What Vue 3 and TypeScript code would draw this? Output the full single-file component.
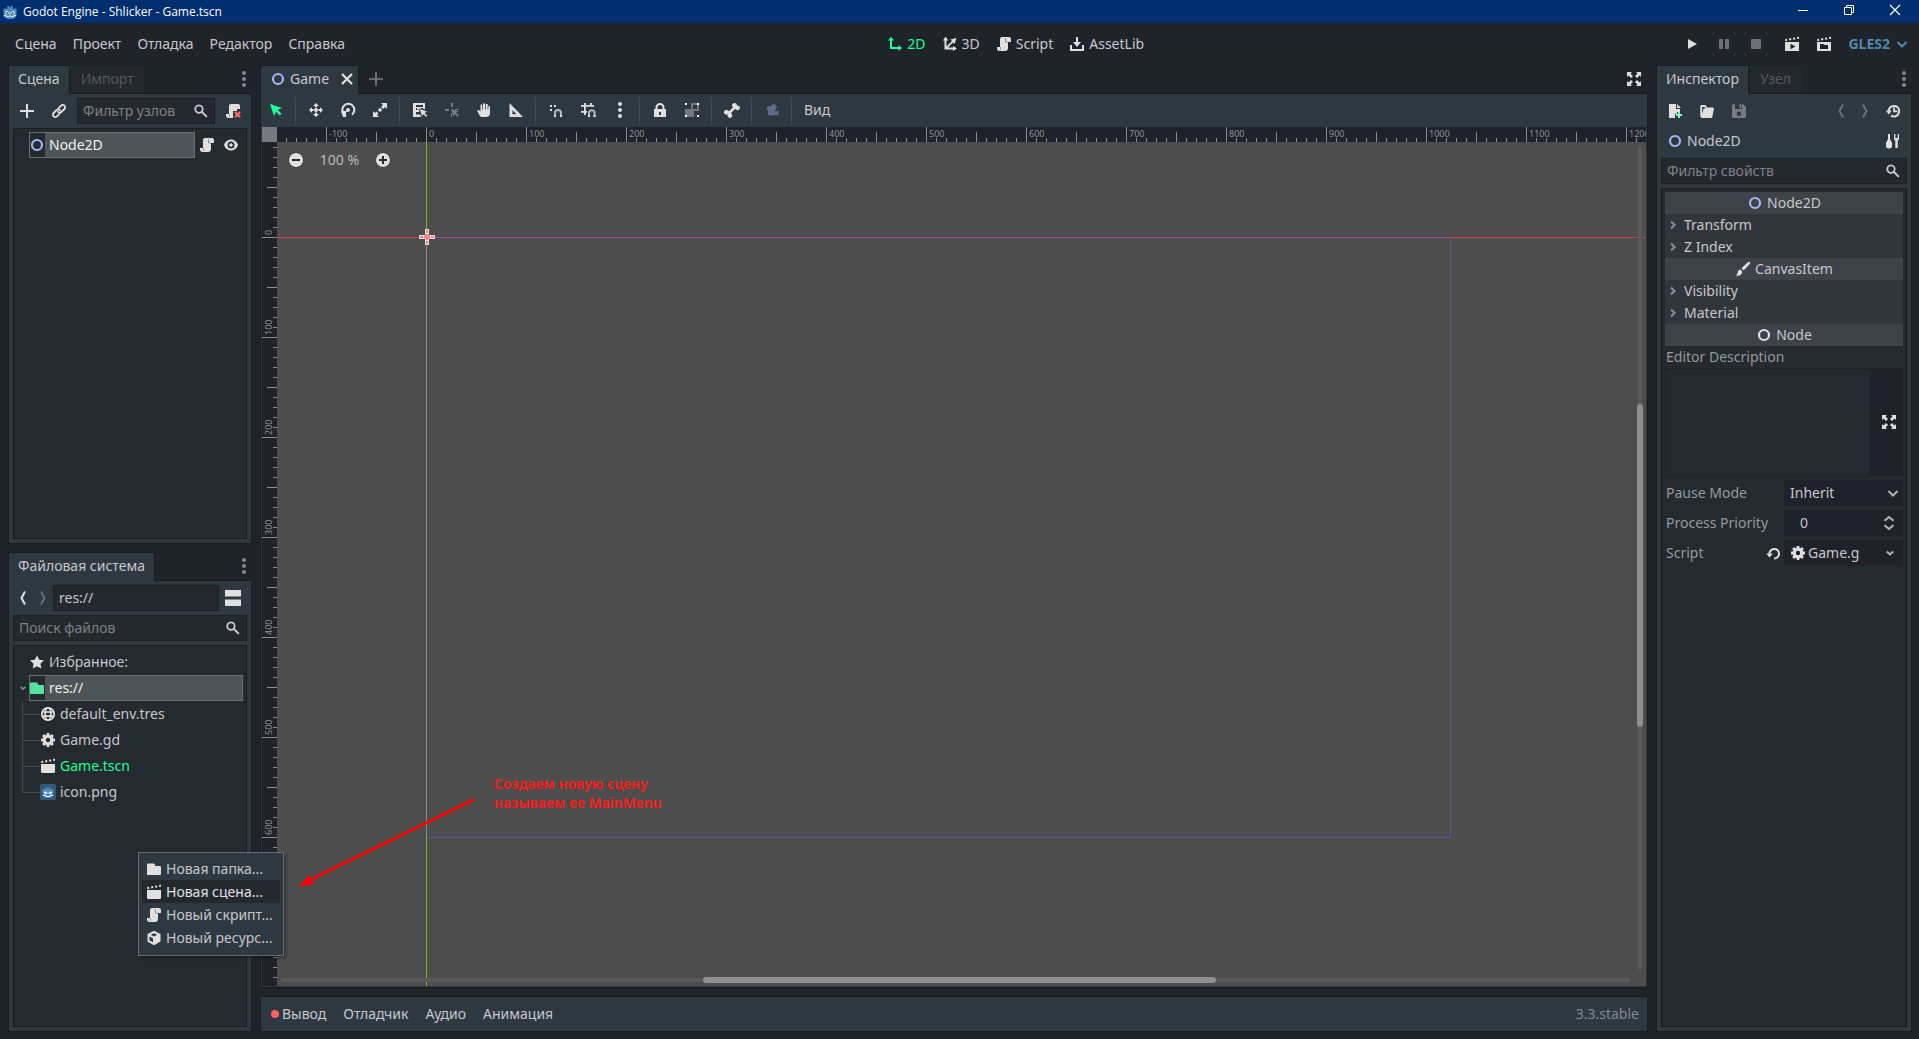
<script setup lang="ts">
import { computed, h, onBeforeUnmount, onMounted, ref } from 'vue'

const icons: Record<string, string> = {
  add: '<path d="M7 1v6H1v2h6v6h2V9h6V7H9V1z"/>',
  addThin: '<path d="M7.2 1v6.2H1v1.6h6.2V15h1.6V8.800H15V7.200H8.800V1z"/>',
  link: '<g fill="none" stroke="currentColor" stroke-width="1.800" stroke-linecap="round"><path d="M7.600 5.200l2.500-2.500a2.300 2.300 0 0 1 3.300 3.300l-3 3a2.300 2.300 0 0 1-3.400-.2"/><path d="M8.400 10.800l-2.500 2.500A2.300 2.300 0 0 1 2.600 10l3-3A2.300 2.300 0 0 1 9 7.200"/></g>',
  search: '<path fill-rule="evenodd" d="M6 1.500a4.600 4.600 0 1 0 2.500 8.400l4.700 4.700 1.400-1.400-4.700-4.700A4.600 4.600 0 0 0 6 1.500m0 1.800a2.800 2.800 0 1 1 0 5.600 2.800 2.800 0 0 1 0-5.600"/>',
  script: '<path d="M6 1a2 2 0 0 0-2 2v8H1v2a2.500 2.500 0 0 0 2.500 2H9a3 3 0 0 0 3-3V6h3V3a2 2 0 0 0-2-2z"/><path d="M9.500 2v4H12" fill="none" stroke="#8d9194" stroke-width="1"/><path d="M4.500 11v3" stroke="#9a9da0" stroke-width="1"/>',
  scriptRemove: '<path d="M6 1a2 2 0 0 0-2 2v8H1v2a2.500 2.500 0 0 0 2.500 2H8V8h4V6h3V3a2 2 0 0 0-2-2z"/><path d="M4.500 11v3" stroke="#9a9da0" stroke-width="1"/><path d="M10 9l5 5M15 9l-5 5" stroke="#ff6b6b" stroke-width="2.200"/>',
  ring: '<circle cx="8" cy="8" r="5" fill="none" stroke="currentColor" stroke-width="2.200"/>',
  eye: '<path fill-rule="evenodd" d="M8 2.500C5 2.500 2.200 4.400 1 8c1.200 3.600 4 5.500 7 5.500s5.800-1.900 7-5.500c-1.200-3.600-4-5.500-7-5.500m0 2a3.500 3.500 0 1 1 0 7 3.500 3.500 0 0 1 0-7"/><circle cx="8" cy="8" r="1.800"/>',
  dots: '<circle cx="8" cy="2" r="2"/><circle cx="8" cy="8" r="2"/><circle cx="8" cy="14" r="2"/>',
  close: '<path d="M3 3l10 10M13 3L3 13" stroke="currentColor" stroke-width="2.200"/>',
  select: '<path d="M2 2l4 12 2-4.200 3.800 3.700 1.700-1.700L9.800 8 14 6z"/>',
  move: '<circle cx="8" cy="8" r="2"/><path d="M8 1L5 4h2v1.500h2V4h2zM8 15l-3-3h2v-1.500h2V12h2zM1 8l3-3v2h1.500v2H4v2zM15 8l-3-3v2h-1.500v2H12v2z"/>',
  rotate: '<path d="M4.200 12.200A6 6 0 1 1 12 12.600" fill="none" stroke="currentColor" stroke-width="2"/><circle cx="8" cy="8" r="2"/><path d="M1 9h6l-1 1.800V15H3z"/>',
  scale: '<path d="M9 1h6v6l-2-2-2 2-2-2 2-2zM7 15H1V9l2 2 1.500-1.500 2 2L5 13z"/><circle cx="8" cy="8" r="1.800"/>',
  list: '<path d="M1 1h12v6.500l-2-1V3H4v2h7v1H4v2h3l.5 2H4v2.500h4.300L9 15H1z"/><path d="M5 6h4v1.500H5z"/><path d="M7.500 6.500l2.400 8.500 1.500-2.500 2.600 2.800 1.500-1.500-2.600-2.600L15.500 9.500z" stroke="#2e3840" stroke-width=".6"/>',
  pivot: '<path d="M7 1h2v4H7zM1 7h4v2H1zM11 7h4v1h-4zM7 11h1v4H7z"/><path d="M7 7l2.200 7.500 1.500-2.500 2.600 2.800 1.400-1.400-2.600-2.600L14.500 9.300z"/>',
  pan: '<path d="M7 1.500v6H6.300V2.600H4.500v7L2.700 8 1 8.500l2.500 4.700C4.200 14.500 5.500 15 7 15h3c2.500 0 4-1.500 4-4V4.300h-1.700v3.500h-.6V2h-1.800v5.500h-.7v-6z"/>',
  ruler: '<path fill-rule="evenodd" d="M1.500 1v14H15zM4.500 8l4 4.200h-4z"/>',
  snap: '<path d="M2 3h2v2H2zM6 3h2v2H6zM2 7h2v2H2z"/><path d="M7 15v-4a3 3 0 0 1 6 0v4" fill="none" stroke="currentColor" stroke-width="2" opacity=".75"/><path d="M6 13h2v2H6zM12 13h2v2h-2z"/>',
  gridSnap: '<path d="M4 1h1.800v2H10V1h1.800v2H14v1.800H5.800V9H7v1.800H5.800V13H4v-2.200H1V9h3V4.800H1V3h3z"/><path d="M9 15v-4a2.800 2.800 0 0 1 5.600 0v4" fill="none" stroke="currentColor" stroke-width="2" opacity=".75"/><path d="M8 13h2v2H8zM13.600 13h2v2h-2z"/>',
  lock: '<path fill-rule="evenodd" d="M8 1a4.500 4.500 0 0 0-4.500 4.500V7H2v8h12V7h-1.500V5.500A4.500 4.500 0 0 0 8 1m0 2a2.500 2.500 0 0 1 2.500 2.500V7h-5V5.500A2.500 2.500 0 0 1 8 3M7 10h2v3H7z"/>',
  group: '<path fill="#74787c" fill-rule="evenodd" d="M7 1h8v8h-5v6H1V7h6zM9 3v4h4V3z"/><path fill="#fff" d="M1 1h2v2H1zM13 1h2v2h-2zM1 13h2v2H1zM13 13h2v2h-2z"/>',
  bone: '<path d="M10.500 1a2.500 2.500 0 0 0-2.400 3.300L9 5.500 5 9.300 3.900 8.500A2.400 2.400 0 1 0 4 12a2.400 2.400 0 1 0 3.600-.2L7 10.900l4-3.900 1.200.8A2.400 2.400 0 1 0 13 3.500 2.500 2.500 0 0 0 10.500 1"/>',
  camera: '<path d="M9.500 2a3 3 0 0 0-2.800 2.500A2.500 2.500 0 1 0 4 8.800V12a1.500 1.500 0 0 0 1.500 1.500H10A1.500 1.500 0 0 0 11.500 12l3 2V8l-3 2V7.300A3 3 0 0 0 9.500 2"/>',
  axes2d: '<path d="M4 0.800L1 4.500h2V13h8.500v2l3.700-3-3.700-3v2H5V4.500h2z"/>',
  axes3d: '<path d="M3.500.8L.8 4.500h1.700v9h8.500V15l4-2.500L11 10v1.500H6l5-5 1.500 1.500L14.500 2 8.500 3.500 10 5 4.500 10.500v-6h1.800z"/>',
  download: '<path d="M7 1h2v5h3L8 11 4 6h3zM1 9h2v4h10V9h2v6H1z"/>',
  play: '<path d="M4 3v10l9-5z"/>',
  pause: '<path d="M3 3h4v10H3zM9 3h4v10H9z"/>',
  stop: '<path d="M3 3h10v10H3z"/>',
  clapPlay: '<path d="M1 3.200l2-.4.400 2-1.900.4zM5 2.400l2-.4.400 2-2 .4zM9 1.700l2-.3.400 2-2 .3zM13 1l2-.2v2l-1.700.3z"/><path fill-rule="evenodd" d="M1 6h14v9H1zm5.500 1.800v5.400l5-2.700z"/>',
  clapFolder: '<path d="M1 3.200l2-.4.400 2-1.900.4zM5 2.400l2-.4.400 2-2 .4zM9 1.700l2-.3.400 2-2 .3zM13 1l2-.2v2l-1.700.3z"/><path fill-rule="evenodd" d="M1 6h14v9H1zm3 2v5h8V9H8.500L7.500 8z"/>',
  clap: '<path d="M1 3.200l2-.4.400 2-1.900.4zM5 2.400l2-.4.400 2-2 .4zM9 1.700l2-.3.400 2-2 .3zM13 1l2-.2v2l-1.700.3z"/><path d="M1 6h14v7.500a1.500 1.500 0 0 1-1.500 1.500h-11A1.500 1.500 0 0 1 1 13.500z"/>',
  chevDown: '<path d="M3.500 6L8 10.500 12.500 6" fill="none" stroke="currentColor" stroke-width="2"/>',
  chevSmall: '<path d="M4.800 6.500L8 9.500l3.200-3" fill="none" stroke="currentColor" stroke-width="2"/>',
  chevRight: '<path d="M6 4.500L9.500 8 6 11.500" fill="none" stroke="currentColor" stroke-width="2"/>',
  back: '<path d="M10 1.500L6.500 8l3.500 6.500" fill="none" stroke="currentColor" stroke-width="2"/>',
  forward: '<path d="M6 1.500L9.500 8 6 14.500" fill="none" stroke="currentColor" stroke-width="2"/>',
  split: '<path d="M0 0h16v6.500H0zM0 9.500h16V16H0z"/>',
  star: '<path d="M8 1.200l2.100 4.500 4.900.6-3.600 3.400.9 4.900L8 12.200l-4.300 2.400.9-4.900L1 6.300l4.900-.6z"/>',
  folder: '<path d="M2 2.500a1 1 0 0 0-1 1V14h13a1 1 0 0 0 1-1V6a1 1 0 0 0-1-1H9.500l-1-2a1 1 0 0 0-.8-.5z"/>',
  globe: '<g fill="none" stroke="currentColor" stroke-width="1.700"><circle cx="8" cy="8" r="6.200"/><ellipse cx="8" cy="8" rx="2.800" ry="6.200"/><path d="M2 6h12M2 10.200h12"/></g>',
  gear: '<circle cx="8" cy="8" r="3.800" fill="none" stroke="currentColor" stroke-width="3.200"/><g stroke="currentColor" stroke-width="2.800"><path d="M8 1v2.500M8 12.500V15M1 8h2.500M12.500 8H15M3.100 3.100l1.700 1.700M11.200 11.200l1.700 1.700M3.100 12.900l1.700-1.700M11.200 4.800l1.700-1.700"/></g>',
  robotTile: '<rect width="16" height="16" rx="1.500" fill="#355570"/><path fill="#478cbf" d="M2.500 6l1.300-1.300 1 .6.600-.3V3.500L7 3l.5 1.200h1L9 3l1.600.5V5l.6.300 1-.6L13.500 6v6c-1.500 1.500-3.500 2-5.500 2s-4-.5-5.500-2z"/><circle cx="5.400" cy="8.700" r="1.300" fill="#fff"/><circle cx="10.600" cy="8.700" r="1.300" fill="#fff"/><path stroke="#fff" fill="none" stroke-width=".9" d="M3 11.500h3v1h4v-1h3M8 8.500v1.500"/>',
  robot: '<path fill="#478cbf" d="M1 6l2-2 1.500.9.8-.4-.1-2L7 1.800 7.500 3.500h1L9 1.800l1.800.7-.1 2 .8.4L13 4l2 2-.6 1v5.500C12.500 14.400 10.500 15 8 15s-4.500-.6-6.400-2.500V7z"/><circle cx="5" cy="8.800" r="1.700" fill="#fff"/><circle cx="11" cy="8.800" r="1.700" fill="#fff"/><circle cx="5.200" cy="9" r=".9" fill="#414042"/><circle cx="10.800" cy="9" r=".9" fill="#414042"/><path stroke="#fff" fill="none" stroke-width=".8" d="M1.800 11.500h2.400v1.200h2.600v-.7h2.400v.7h2.600v-1.200h2.400M8 8.500v2"/>',
  cube: '<path fill-rule="evenodd" d="M8 .8L1.500 4v7.600L8 15.200l6.500-3.600V4zm0 2.400l3.200 1.600L8 6.400 4.800 4.800zM3.400 6.500L7 8.300v4L3.400 10.300z"/>',
  expand: '<path d="M1 1h5L4.500 2.500 7 5 5 7 2.500 4.500 1 6zM15 1v5l-1.500-1.500L11 7 9 5l2.500-2.500L10 1zM1 15v-5l1.500 1.500L5 9l2 2-2.500 2.500L6 15zM15 15h-5l1.500-1.500L9 11l2-2 2.500 2.500L15 10z"/>',
  fileNew: '<path d="M2 1v14h6v-4h2V9h3V6H9V1z"/><path d="M10 1v4h4z"/><path fill="#84ffb1" d="M11 9h2v2h2v2h-2v2h-2v-2H9v-2h2z"/>',
  folderOpen: '<path fill-rule="evenodd" d="M2.500 2a1.200 1.200 0 0 0-1.200 1.200V13A2 2 0 0 0 3 15h9.500l.8-1L15 5.500 14 4.500H8L6.500 2zM3 4h2.600l1 1.500h-2L3.500 11z"/>',
  save: '<path fill-rule="evenodd" d="M2.500 1A1.500 1.500 0 0 0 1 2.500v11A1.500 1.500 0 0 0 2.500 15h11a1.500 1.500 0 0 0 1.500-1.500V4l-3-3h-1v5H4V1zm6 0v4h1.800V1zM8 8.500a2.300 2.300 0 1 1 0 4.600 2.300 2.300 0 0 1 0-4.600"/>',
  history: '<path d="M3.700 9A5.300 5.300 0 1 1 6 12.600" fill="none" stroke="currentColor" stroke-width="2"/><path d="M.8 7.500h6L3.800 11.500zM8.200 4.500H10v3h2.500v1.700H8.200z"/>',
  tools: '<path d="M3 1h2v6h1v2h1v4.500A2.800 2.800 0 0 1 4 15.500 2.800 2.800 0 0 1 1 13V9h1V7h1zM9 1v4.500c0 1 .5 1.700 1.300 2.100V15h2.400V7.600C13.500 7.200 14 6.500 14 5.500V1h-1.300v4h-2.300V1z"/>',
  brush: '<path d="M14.800 1.200c-.7-.6-1.500-.3-2.200.3L6.500 7.300l2.200 2.200 5.800-6.200c.6-.7.900-1.400.3-2.100M5.300 8.600c-2.300.2-2.300 2-2.700 3.500C2.300 13.200 1.600 14 1 14.500c2.200.8 6 .2 6.300-3.700z"/>',
  undo: '<path d="M4.500 9.500A4.800 4.800 0 1 1 9 13.500" fill="none" stroke="currentColor" stroke-width="2"/><path d="M1.200 8.500h6.600L4.500 12.500z"/>',
  spin: '<path d="M3.500 5.800L8 2l4.500 3.800M3.500 10.200L8 14l4.500-3.800" fill="none" stroke="currentColor" stroke-width="2"/>',
  minus: '<circle cx="8" cy="8" r="7.500" fill="#333"/><circle cx="8" cy="8" r="7"/><path fill="#2b2b2b" d="M4 7h8v2H4z"/>',
  plus: '<circle cx="8" cy="8" r="7.500" fill="#333"/><circle cx="8" cy="8" r="7"/><path fill="#2b2b2b" d="M7 4h2v3h3v2H9v3H7V9H4V7h3z"/>',
  winMin: '<path d="M3 8.500h10" stroke="currentColor"/>',
  winMax: '<path d="M3.500 5.500h7v7h-7zM5.500 5.500v-2h7v7h-2" fill="none" stroke="currentColor"/>',
  winClose: '<path d="M3 3l10 10M13 3L3 13" stroke="currentColor" stroke-width="1.200"/>',
}

const Icon = (props: { name: string }) =>
  h('svg', { class: 'ico', viewBox: '0 0 16 16', 'aria-hidden': 'true', innerHTML: icons[props.name] })
Icon.props = ['name']

const menus = ['Сцена', 'Проект', 'Отладка', 'Редактор', 'Справка']
const modes = [
  { icon: 'axes2d', label: '2D', on: true },
  { icon: 'axes3d', label: '3D', on: false },
  { icon: 'script', label: 'Script', on: false },
  { icon: 'download', label: 'AssetLib', on: false },
]
const tools: { icon: string; label: string; tone?: string }[][] = [
  [{ icon: 'select', label: 'Select', tone: 'accent' }],
  [{ icon: 'move', label: 'Move' }, { icon: 'rotate', label: 'Rotate' }, { icon: 'scale', label: 'Scale' }],
  [{ icon: 'list', label: 'List' }, { icon: 'pivot', label: 'Pivot', tone: 'dim' }, { icon: 'pan', label: 'Pan' }, { icon: 'ruler', label: 'Ruler' }],
  [{ icon: 'snap', label: 'Snap' }, { icon: 'gridSnap', label: 'Grid snap' }, { icon: 'dots', label: 'Snap options' }],
  [{ icon: 'lock', label: 'Lock' }, { icon: 'group', label: 'Group' }],
  [{ icon: 'bone', label: 'Skeleton' }],
  [{ icon: 'camera', label: 'Camera', tone: 'cam' }],
]
const files = [
  { icon: 'globe', name: 'default_env.tres', open: false },
  { icon: 'gear', name: 'Game.gd', open: false },
  { icon: 'clap', name: 'Game.tscn', open: true },
  { icon: 'robotTile', name: 'icon.png', open: false },
]
const popup = [
  { icon: 'folder', label: 'Новая папка...' },
  { icon: 'clap', label: 'Новая сцена...' },
  { icon: 'script', label: 'Новый скрипт...' },
  { icon: 'cube', label: 'Новый ресурс...' },
]
const groups = [
  { icon: 'ring', tone: 'blue', title: 'Node2D', items: ['Transform', 'Z Index'] },
  { icon: 'brush', tone: '', title: 'CanvasItem', items: ['Visibility', 'Material'] },
  { icon: 'ring', tone: '', title: 'Node', items: [] as string[] },
]
const bottomTabs = ['Вывод', 'Отладчик', 'Аудио', 'Анимация']

// World origin measured from the top left corner of the 2D view.
const originX = 149
const originY = 95

interface Tick { pos: number; size: number; label: string }
function ticks(origin: number, length: number): Tick[] {
  const out: Tick[] = []
  for (let v = Math.ceil(-origin / 10) * 10; v + origin < length; v += 10) {
    const major = v % 100 === 0
    out.push({ pos: v + origin, size: major ? 15 : v % 50 === 0 ? 10 : 4, label: major ? String(v) : '' })
  }
  return out
}

// The rulers only carry the ticks that fit the visible part of the view.
const canvas = ref<HTMLElement | null>(null)
const viewWidth = ref(0)
const viewHeight = ref(0)
const hTicks = computed(() => ticks(originX, viewWidth.value))
const vTicks = computed(() => ticks(originY, viewHeight.value))
function measure() {
  viewWidth.value = canvas.value?.clientWidth ?? 0
  viewHeight.value = canvas.value?.clientHeight ?? 0
}
onMounted(() => {
  measure()
  window.addEventListener('resize', measure)
})
onBeforeUnmount(() => window.removeEventListener('resize', measure))

const path = ref('res://')
const priority = ref('0')
</script>

<template>
  <div class="window">
    <header class="title">
      <Icon name="robot" />
      <span class="title-text">Godot Engine - Shlicker - Game.tscn</span>
      <button class="win" aria-label="Minimize"><Icon name="winMin" /></button>
      <button class="win" aria-label="Restore"><Icon name="winMax" /></button>
      <button class="win" aria-label="Close"><Icon name="winClose" /></button>
    </header>

    <nav class="menubar">
      <div class="menus">
        <button v-for="m in menus" :key="m">{{ m }}</button>
      </div>
      <div class="modes">
        <button v-for="m in modes" :key="m.label" :class="{ accent: m.on }"><Icon :name="m.icon" />{{ m.label }}</button>
      </div>
      <div class="run">
        <button class="tool" aria-label="Play"><Icon name="play" /></button>
        <button class="tool off" aria-label="Pause"><Icon name="pause" /></button>
        <button class="tool off" aria-label="Stop"><Icon name="stop" /></button>
        <button class="tool spaced" aria-label="Play scene"><Icon name="clapPlay" /></button>
        <button class="tool" aria-label="Play custom scene"><Icon name="clapFolder" /></button>
        <button class="driver">GLES2<Icon name="chevDown" /></button>
      </div>
    </nav>

    <main class="work">
      <div class="left">
        <section class="dock scene-dock">
          <div class="tabs">
            <button class="tab on">Сцена</button>
            <button class="tab">Импорт</button>
            <button class="more" aria-label="Dock options"><Icon name="dots" /></button>
          </div>
          <div class="panel">
            <div class="row gap">
              <button class="tool" aria-label="Add node"><Icon name="add" /></button>
              <button class="tool" aria-label="Instance scene"><Icon name="link" /></button>
              <label class="field"><input type="text" placeholder="Фильтр узлов" aria-label="Фильтр узлов" /><Icon name="search" /></label>
              <button class="tool" aria-label="Detach script"><Icon name="scriptRemove" /></button>
            </div>
            <ul class="tree">
              <li class="node">
                <span class="picked"><span class="cell blue"><Icon name="ring" /></span>Node2D</span>
                <Icon name="script" />
                <Icon name="eye" />
              </li>
            </ul>
          </div>
        </section>

        <section class="dock fs-dock">
          <div class="tabs">
            <button class="tab on">Файловая система</button>
            <button class="more" aria-label="Dock options"><Icon name="dots" /></button>
          </div>
          <div class="panel">
            <div class="row">
              <button class="step" aria-label="Back"><Icon name="back" /></button>
              <button class="step off" aria-label="Forward"><Icon name="forward" /></button>
              <label class="field"><input v-model="path" type="text" aria-label="Path" /></label>
              <button class="tool" aria-label="Split view"><Icon name="split" /></button>
            </div>
            <label class="field"><input type="text" placeholder="Поиск файлов" aria-label="Поиск файлов" /><Icon name="search" /></label>
            <ul class="tree">
              <li class="fav"><Icon name="star" />Избранное:</li>
              <li class="root">
                <Icon name="chevSmall" />
                <span class="picked"><span class="cell green"><Icon name="folder" /></span>res://</span>
              </li>
              <li>
                <ul class="children">
                  <li v-for="f in files" :key="f.name" class="file"><Icon :name="f.icon" /><span :class="{ accent: f.open }">{{ f.name }}</span></li>
                </ul>
              </li>
            </ul>
          </div>
        </section>
      </div>

      <div class="center">
        <section class="dock editor">
          <div class="tabs">
            <button class="tab on scene-tab"><span class="blue"><Icon name="ring" /></span><span class="grow">Game</span><Icon name="close" /></button>
            <button class="new-tab" aria-label="New scene"><Icon name="addThin" /></button>
            <button class="more wide" aria-label="Distraction free mode"><Icon name="expand" /></button>
          </div>
          <div class="panel viewport">
            <div class="toolbar">
              <template v-for="(g, i) in tools" :key="i">
                <button v-for="t in g" :key="t.icon" class="tool" :class="t.tone" :aria-label="t.label"><Icon :name="t.icon" /></button>
                <span class="sep"></span>
              </template>
              <button class="view">Вид</button>
            </div>
            <div class="stage">
              <div class="corner"></div>
              <svg class="ruler">
                <g v-for="t in hTicks" :key="t.pos">
                  <rect :x="t.pos" :y="15 - t.size" width="1" :height="t.size" />
                  <text v-if="t.label" :x="t.pos + 3" y="10">{{ t.label }}</text>
                </g>
              </svg>
              <svg class="ruler">
                <g v-for="t in vTicks" :key="t.pos">
                  <rect :x="15 - t.size" :y="t.pos" :width="t.size" height="1" />
                  <text v-if="t.label" :transform="`translate(10 ${t.pos - 2}) rotate(-90)`">{{ t.label }}</text>
                </g>
              </svg>
              <div ref="canvas" class="canvas">
                <svg class="world">
                  <rect x="0" :y="originY" width="100%" height="1" fill="#c93d4f" />
                  <rect :x="originX" y="0" width="1" height="100%" fill="#7cb518" />
                  <rect :x="originX" :y="originY" width="1024" height="1" fill="#a1489a" />
                  <rect :x="originX" :y="originY" width="1" height="600" fill="#75957c" />
                  <rect :x="originX + 1" :y="originY + 600" width="1024" height="1" fill="#595596" />
                  <rect :x="originX + 1024" :y="originY" width="1" height="600" fill="#595596" />
                  <g :transform="`translate(${originX + 1} ${originY})`">
                    <path d="M-2-8h4v6h6v4h-6v6h-4v-6h-6v-4h6z" fill="#e0e0e0" />
                    <path d="M-1-7h2v3h-2zM-1 4h2v3h-2zM-7-1h3v2h-3zM4-1h3v2h-3z" fill="#ff8484" />
                    <circle r="3" fill="#ff8484" />
                  </g>
                </svg>
                <div class="zoom">
                  <button aria-label="Zoom out"><Icon name="minus" /></button>
                  <button class="percent">100 %</button>
                  <button aria-label="Zoom in"><Icon name="plus" /></button>
                </div>
                <div class="bar vertical"><span></span></div>
                <div class="bar horizontal"><span></span></div>
              </div>
            </div>
          </div>
        </section>

        <footer class="bottom">
          <button v-for="(b, i) in bottomTabs" :key="b"><i v-if="i === 0" class="alert"></i>{{ b }}</button>
          <span class="version">3.3.stable</span>
        </footer>
      </div>

      <section class="dock inspector">
        <div class="tabs">
          <button class="tab on">Инспектор</button>
          <button class="tab">Узел</button>
          <button class="more" aria-label="Dock options"><Icon name="dots" /></button>
        </div>
        <div class="panel">
          <div class="row gap">
            <button class="tool" aria-label="New resource"><Icon name="fileNew" /></button>
            <button class="tool" aria-label="Load resource"><Icon name="folderOpen" /></button>
            <button class="tool dim" aria-label="Save resource"><Icon name="save" /></button>
            <span class="grow"></span>
            <button class="step off" aria-label="Previous"><Icon name="back" /></button>
            <button class="step off" aria-label="Next"><Icon name="forward" /></button>
            <button class="tool" aria-label="History"><Icon name="history" /></button>
          </div>
          <div class="row object">
            <span class="blue"><Icon name="ring" /></span>
            <span class="grow">Node2D</span>
            <button class="tool" aria-label="Object tools"><Icon name="tools" /></button>
          </div>
          <label class="field"><input type="text" placeholder="Фильтр свойств" aria-label="Фильтр свойств" /><Icon name="search" /></label>
          <div class="props">
            <template v-for="g in groups" :key="g.title">
              <h2 class="category"><span :class="g.tone"><Icon :name="g.icon" /></span>{{ g.title }}</h2>
              <button v-for="s in g.items" :key="s" class="fold"><Icon name="chevRight" />{{ s }}</button>
            </template>
            <label class="caption" for="descr">Editor Description</label>
            <div class="descr">
              <textarea id="descr"></textarea>
              <button aria-label="Expand editor"><Icon name="expand" /></button>
            </div>
            <div class="prop">
              <label for="pause">Pause Mode</label>
              <span class="value"><select id="pause"><option>Inherit</option><option>Stop</option><option>Process</option></select><Icon name="chevDown" /></span>
            </div>
            <div class="prop">
              <label for="prio">Process Priority</label>
              <span class="value number"><input id="prio" v-model="priority" type="text" /><Icon name="spin" /></span>
            </div>
            <div class="prop">
              <label for="script">Script</label>
              <button class="revert" aria-label="Revert"><Icon name="undo" /></button>
              <button id="script" class="value res"><Icon name="gear" /><span class="grow">Game.g</span><Icon name="chevSmall" /></button>
            </div>
          </div>
        </div>
      </section>
    </main>

    <ul class="popup">
      <li v-for="(p, i) in popup" :key="p.label"><button :class="{ hover: i === 1 }"><Icon :name="p.icon" />{{ p.label }}</button></li>
    </ul>

    <svg class="arrow" viewBox="0 0 180 92" aria-hidden="true">
      <path d="M175 4L14 83" stroke="#ff0000" stroke-width="3" stroke-linecap="round" />
      <path d="M1 91l10-12 2 3 3 6z" fill="#ff0000" />
    </svg>
    <p class="note">Создаем новую сцену<br />называем ее MainMenu</p>
  </div>
</template>

<style>
body { margin: 0; background: #1f232a; }
</style>

<style scoped>
.window { position: relative; display: flex; flex-direction: column; min-height: 100vh; overflow: hidden; background: #1f232a; color: #c7c8ca; font: 14px/20px "Noto Sans", "Open Sans", sans-serif; box-sizing: border-box; }
.window *, .window *::before { box-sizing: border-box; }
button { border: 0; padding: 0; margin: 0; background: none; color: inherit; font: inherit; white-space: nowrap; }
input, select, textarea { border: 0; padding: 0; margin: 0; background: none; color: inherit; font: inherit; outline: 0; min-width: 0; border-radius: 0; }
ul { list-style: none; margin: 0; padding: 0; }
.ico { width: 16px; height: 16px; flex: none; display: block; fill: currentColor; color: #e0e0e0; overflow: visible; }
.accent, .accent .ico { color: #1fff97; }
.dim .ico { color: #757b80; }
.cam .ico { color: #5f6a8f; }
.blue .ico { color: #a5b7f3; }
.green .ico { color: #54e3a0; }
.grow { flex: 1; text-align: left; }

.title { display: flex; align-items: center; height: 23px; padding: 0 1px 0 2px; background: #002e6f; color: #fff; }
.title-text { flex: 1; padding-left: 5px; font: 12px/20px "Open Sans", "Noto Sans", sans-serif; }
.win { width: 46px; height: 23px; display: flex; align-items: center; justify-content: center; padding-bottom: 3px; }
.win .ico { color: #fff; }

.menubar { display: flex; align-items: center; height: 42px; padding: 0 9px 0 7px; }
.menus { display: flex; }
.menus button { padding: 0 8px; }
.modes { flex: 1; display: flex; justify-content: center; gap: 4px; }
.modes button { display: flex; align-items: center; gap: 4px; padding: 0 6px; }
.run { display: flex; align-items: center; gap: 4px; }
.tool { width: 28px; height: 26px; display: flex; align-items: center; justify-content: center; flex: none; }
.step { width: 20px; height: 26px; display: flex; align-items: center; justify-content: center; flex: none; }
.off .ico { color: #6d7074; }
.spaced { margin-left: 4px; }
.driver { display: flex; align-items: center; gap: 4px; padding-left: 6px; color: #5189aa; font-weight: 700; }
.driver .ico { color: #5189aa; }

.work { flex: 1; display: grid; grid-template-columns: 244px minmax(0, 1fr) 256px; gap: 8px; padding: 0 7px 7px 8px; }
.left, .center { display: flex; flex-direction: column; gap: 8px; min-width: 0; }
.dock { display: flex; flex-direction: column; min-width: 0; }
.scene-dock, .editor { flex: 1; }
.fs-dock { flex: 0 0 480px; }
.tabs { display: flex; height: 28px; }
.tab { height: 27px; margin: 1px 0 0 1px; padding: 0 10px 2px; background: #23282f; color: #54585d; }
.tab.on { height: 29px; position: relative; margin: 0; padding: 0 9px 2px; border: 1px solid #191d22; border-bottom: 0; background: #2e3840; color: #c7c8ca; }
.more { margin-left: auto; width: 16px; display: flex; align-items: center; justify-content: center; }
.more .ico { color: #85888c; }
.more.wide { width: 28px; }
.more.wide .ico { color: #e0e0e0; }
.panel { flex: 1; display: flex; flex-direction: column; gap: 4px; padding: 4px; border: 1px solid #191d22; background: #2e3840; min-width: 0; }
.row { display: flex; align-items: center; height: 26px; flex: none; }
.row.gap { gap: 4px; }
.field { display: flex; align-items: center; flex: none; height: 26px; padding: 0 5px; border: 1px solid #1c2026; background: #23292f; }
.row .field { flex: 1; min-width: 0; }
.field input { flex: 1; width: 0; height: 24px; padding-bottom: 2px; }
.field input::placeholder { color: #7d8185; opacity: 1; }
.field .ico { color: #c8c9cb; }

.tree { flex: 1; padding: 3px; border: 1px solid #1a1e23; background: #232a30; }
.node, .fav, .root, .file { display: flex; align-items: center; height: 26px; }
.node { gap: 8px; padding: 0 4px 0 12px; }
.node .picked { margin-right: -4px; }
.picked { flex: 1; display: flex; align-items: center; gap: 4px; height: 26px; border: 1px solid #6a7072; background: #4e5558; color: #f0f1f1; }
.cell { width: 15px; height: 24px; display: flex; align-items: center; justify-content: flex-end; background: #232a30; }
.fav { padding-left: 12px; gap: 4px; }
.root > .ico { width: 12px; color: #85898c; }
.children { position: relative; }
.children::before { content: ""; position: absolute; left: 5px; top: 0; bottom: 12px; width: 1px; background: #454b50; }
.file { gap: 4px; }
.file::before { content: ""; width: 18px; height: 1px; margin: 0 -4px 0 5px; background: #454b50; }

.scene-tab { display: flex; align-items: center; gap: 4px; width: 99px; }
.tab.scene-tab { padding-right: 3px; }
.new-tab { width: 34px; display: flex; align-items: center; justify-content: center; }
.new-tab .ico { color: #7b7e82; }
.viewport { padding: 0 1px 1px; gap: 0; }
.toolbar { display: flex; align-items: center; gap: 4px; height: 33px; padding-bottom: 1px; }
.sep { width: 4px; height: 26px; padding-left: 1px; flex: none; }
.sep::before { content: ""; display: block; width: 1px; height: 26px; background: #434c53; }
.view { padding: 0 6px; }
.stage { flex: 1; display: grid; grid-template: 15px minmax(0, 1fr) / 15px minmax(0, 1fr); background: #1f222a; }
.corner { background: #78797f; }
.ruler { width: 100%; height: 100%; overflow: hidden; display: block; }
.ruler rect { fill: #8a8c90; }
.ruler text { fill: #8f9194; font-size: 9px; line-height: 12px; }
.canvas { position: relative; overflow: hidden; background: #4d4d4d; }
.world { position: absolute; inset: 0; width: 100%; height: 100%; }
.zoom { position: absolute; left: 11px; top: 8px; display: flex; align-items: center; }
.percent { width: 71px; color: #b9b9b9; }
.bar { position: absolute; border-radius: 3px; background: #595959; }
.bar span { position: absolute; border-radius: 3px; background: #8f8f8f; }
.vertical { right: 4px; top: 4px; bottom: 16px; width: 4px; }
.vertical span { left: -1px; width: 6px; top: 31.3%; height: 39.2%; }
.horizontal { left: 4px; right: 16px; bottom: 4px; height: 4px; }
.horizontal span { top: -1px; height: 6px; left: 31.3%; width: 38%; }

.bottom { display: flex; align-items: center; height: 36px; padding: 0 8px 0 10px; gap: 17px; border: 1px solid #191d22; background: #2e3840; }
.bottom button { display: flex; align-items: center; gap: 3px; }
.alert { width: 8px; height: 8px; border-radius: 50%; background: #ff5f5f; }
.version { margin-left: auto; color: #858a8f; }

.object { gap: 4px; padding-left: 6px; }
.props { flex: 1; padding: 3px; border: 1px solid #1a1e23; background: #232a30; }
.category { display: flex; align-items: center; justify-content: center; gap: 4px; height: 22px; margin: 0; background: #3d4349; font: inherit; }
.fold { display: flex; align-items: center; width: 100%; height: 22px; gap: 3px; background: #30363c; }
.fold .ico { color: #8d9194; }
.caption { display: block; height: 22px; line-height: 22px; padding-left: 1px; color: #969a9d; }
.descr { display: flex; height: 108px; margin-bottom: 4px; border: 1px solid #1f2329; background: #1f222a; }
.descr textarea { flex: 1; background: #232a30; resize: none; }
.descr button { width: 32px; padding-left: 6px; display: flex; align-items: center; justify-content: center; }
.prop { display: flex; align-items: center; height: 26px; margin-bottom: 4px; padding-left: 1px; color: #969a9d; }
.prop label { flex: 1; }
.value { display: flex; align-items: center; width: 119px; height: 26px; padding: 0 2px 0 6px; background: #1f222a; color: #c7c8ca; text-align: left; }
.value .ico { color: #b4b6b8; }
.value select, .value input { flex: 1; width: 0; height: 26px; padding-bottom: 1px; appearance: none; }
.number { padding: 0 6px 0 16px; }
.revert { width: 22px; display: flex; justify-content: center; }
.res { padding: 0 5px 0 6px; gap: 2px; }
.res .ico:first-child { color: #e0e0e0; }

.popup { position: absolute; left: 138px; top: 852px; width: 146px; padding: 4px 3px 6px; border: 1px solid #656d73; background: #2e3840; box-shadow: 2px 2px 3px rgba(0, 0, 0, .35); }
.popup button { display: flex; align-items: center; gap: 4px; width: 100%; height: 23px; padding-left: 4px; }
.popup .hover { background: #23292f; color: #e0e1e2; }
.arrow { position: absolute; left: 298px; top: 796px; width: 180px; height: 92px; }
.note { position: absolute; left: 494px; top: 774px; margin: 0; color: #ff1a1a; font: 600 14px/19px "Noto Sans", sans-serif; }
</style>
